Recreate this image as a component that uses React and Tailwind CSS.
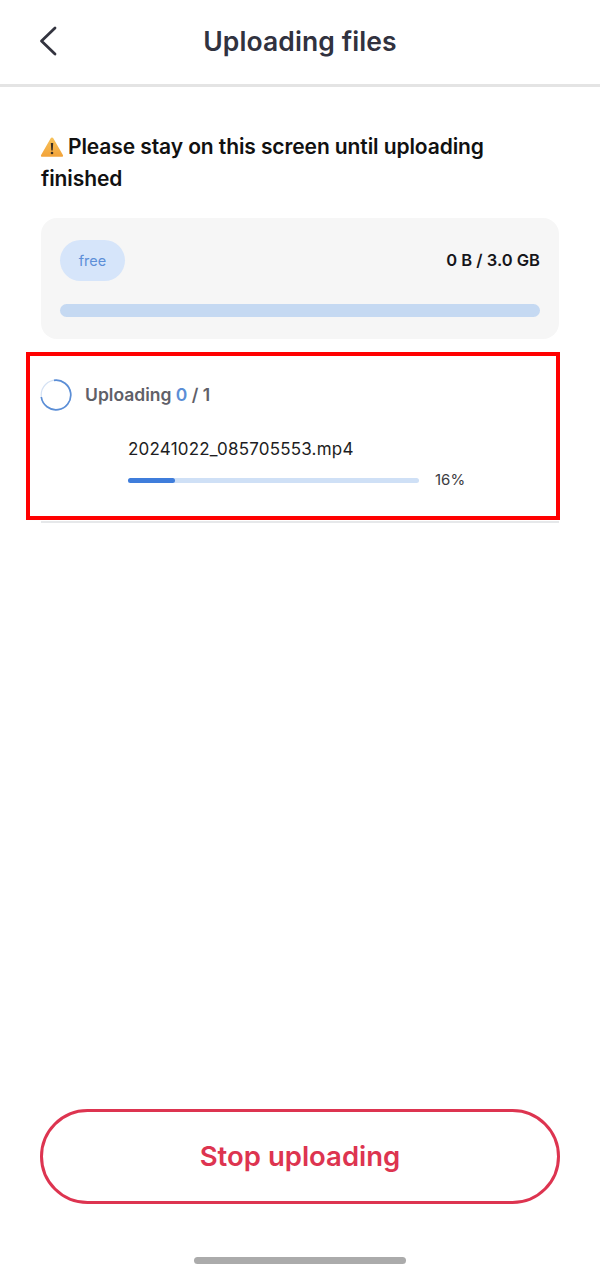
import React from 'react';

function WarningIcon() {
  return (
    <svg className="inline-block w-[24px] h-[22px] -ml-[1px] mr-[4px] align-[-4px]" viewBox="0 0 24 22" aria-hidden="true">
      <defs>
        <linearGradient id="warn" x1="0" y1="0" x2="0" y2="1">
          <stop offset="0" stopColor="#f7c25a" />
          <stop offset="1" stopColor="#f2a33a" />
        </linearGradient>
      </defs>
      <path d="M12 1.5c.6 0 1 .3 1.3.8l9.6 16.6c.5.9 0 1.9-1.1 1.9H2.2c-1.1 0-1.6-1-1.1-1.9l9.6-16.6c.3-.5.7-.8 1.3-.8z" fill="url(#warn)" />
      <path d="M10.8 7h2.4l-.5 7.6h-1.4z" fill="#3b3024" />
      <circle cx="12" cy="17" r="1.3" fill="#3b3024" />
    </svg>
  );
}

function Spinner() {
  return (
    <svg className="w-[32px] h-[32px] shrink-0 -ml-[1px]" viewBox="0 0 32 32" fill="none" aria-hidden="true">
      <circle cx="16" cy="16" r="14.8" stroke="#d5e2f4" strokeWidth="1.2" />
      <path d="M14 1.3A14.8 14.8 0 1 1 1.3 18" stroke="#5b8ed6" strokeWidth="1.7" />
    </svg>
  );
}

export default function App() {
  return (
    <div className="relative flex flex-col h-[1272px] w-[600px] bg-white font-['Inter',sans-serif] overflow-hidden">
      <header className="relative flex items-center justify-center h-[87px] pb-[1px] border-b-[3px] border-[#e4e4e4]">
        <button type="button" className="absolute left-[38px] top-[25px]">
          <svg className="w-[20px] h-[32px]" viewBox="0 0 20 32" fill="none" aria-hidden="true">
            <path d="M17 3 3.5 16 17 29" stroke="#33343f" strokeWidth="2.8" strokeLinecap="round" strokeLinejoin="round" />
          </svg>
        </button>
        <h1 className="text-[26.5px] font-semibold text-[#31323f] tracking-[0.1px]">Uploading files</h1>
      </header>

      <main className="flex flex-col flex-1 px-[41px]">
        <p className="mt-[44px] text-[21px] leading-[32px] font-semibold text-[#111111] tracking-[-0.1px]">
          <WarningIcon />
          Please stay on this screen until uploading finished
        </p>

        <section className="mt-[23px] h-[121px] rounded-[16px] bg-[#f6f6f6] px-[19px] pt-[22px]">
          <div className="flex items-center justify-between">
            <span className="flex items-center justify-center w-[65px] h-[41px] rounded-full bg-[#d6e5fa] text-[14.5px] text-[#5d8fd8]">free</span>
            <span className="text-[16.5px] font-semibold text-[#15151a]">0 B / 3.0 GB</span>
          </div>
          <div className="mt-[23px] h-[13px] rounded-full bg-[#c5d9f2]" />
        </section>

        <section className="relative mt-[14px] h-[170px] border-b-2 border-[#e6e8ea]">
          <div className="absolute -left-[15px] -top-[1px] w-[534px] h-[168px] border-[4px] border-[#ff0000]" />
          <div className="flex items-center gap-[13px] pt-[26px]">
            <Spinner />
            <span className="text-[17.5px] font-semibold text-[#5f6068]">
              Uploading <span className="text-[#5b8ed6]">0</span> / 1
            </span>
          </div>
          <div className="ml-[87px] mt-[25px]">
            <div className="text-[17px] leading-[26px] text-[#1d1d22] tracking-[0.2px]">20241022_085705553.mp4</div>
            <div className="flex items-center mt-[7px]">
              <div className="w-[291px] h-[5px] rounded-full bg-[#cfe0f6]">
                <div className="w-[16%] h-full rounded-full bg-[#3f7ddb]" />
              </div>
              <span className="ml-[16px] text-[15px] text-[#3c3c42]">16%</span>
            </div>
          </div>
        </section>

        <button type="button" className="mt-auto -mx-[1px] h-[95px] rounded-full border-[3px] border-[#dd3450] text-[27.5px] font-semibold text-[#dd3450]">
          Stop uploading
        </button>

        <div className="mt-[53px] mb-[8px] mx-auto w-[212px] h-[7px] rounded-full bg-[#ababab]" />
      </main>
    </div>
  );
}
